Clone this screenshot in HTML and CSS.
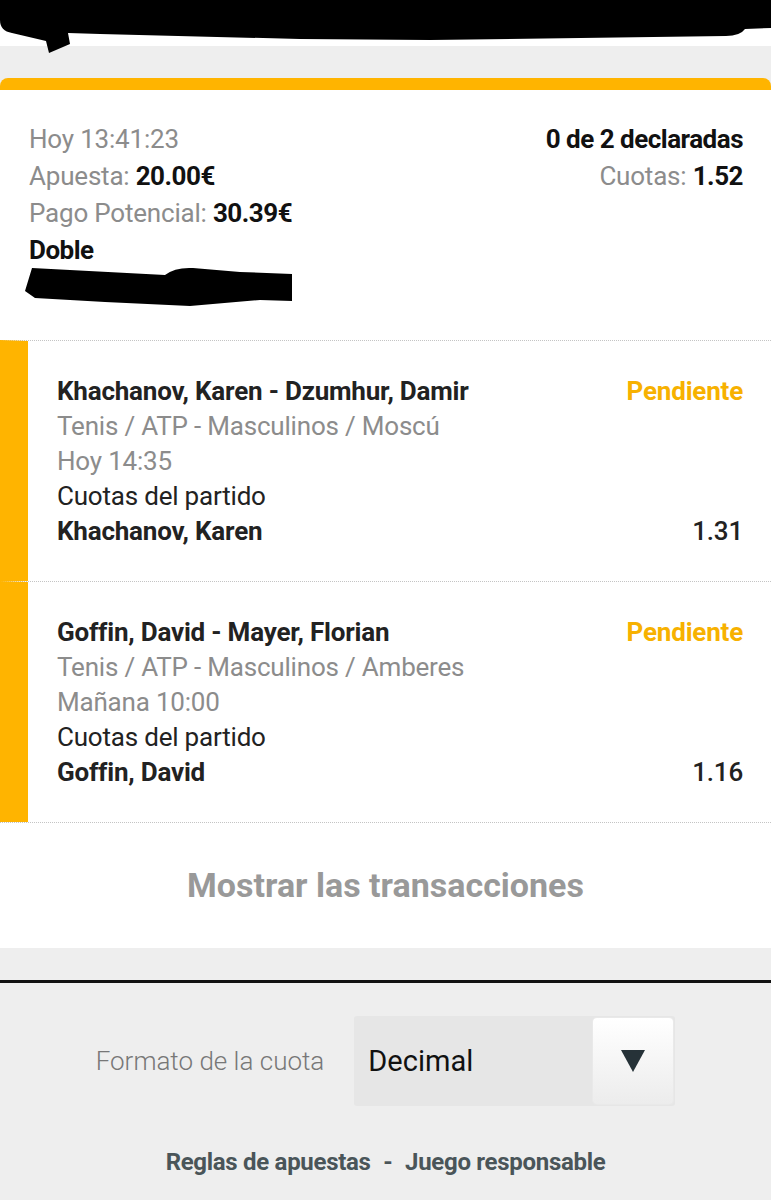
FILE: index.html
```html
<!DOCTYPE html>
<html lang="es">
<head>
    <meta charset="UTF-8">
    <meta name="viewport" content="width=device-width, initial-scale=1.0">
    <title>Apuesta Doble</title>
    <link rel="stylesheet" href="styles.css">
</head>
<body>
    <header class="topbar">
        <svg class="scribble" width="771" height="56" viewBox="0 0 771 56">
            <path d="M0 0 H771 V28 L745 29 Q740 36 726 36 L430 40 L300 39 L100 34 L68 33 L70 44 L49 53 L46 41 L12 33 Q0 31 0 20 Z" fill="#000"/>
        </svg>
    </header>

    <section class="card">
        <div class="summary">
            <div class="summary-left">
                <div class="muted">Hoy 13:41:23</div>
                <div><span class="muted">Apuesta:</span> <b>20.00€</b></div>
                <div><span class="muted">Pago Potencial:</span> <b>30.39€</b></div>
                <div><b>Doble</b></div>
                <svg class="scribble-small" width="270" height="40" viewBox="0 0 270 40">
                    <path d="M0 24 L7 1 L140 8 Q150 0 168 1 L215 5 L267 7 V34 L235 33 L165 39 L80 35 L10 31 Z" fill="#000"/>
                </svg>
            </div>
            <div class="summary-right">
                <div><b>0 de 2 declaradas</b></div>
                <div><span class="muted">Cuotas:</span> <b>1.52</b></div>
            </div>
        </div>

        <div class="selection">
            <div class="sel-row">
                <span class="sel-title">Khachanov, Karen - Dzumhur, Damir</span>
                <span class="sel-status">Pendiente</span>
            </div>
            <div class="muted">Tenis / ATP - Masculinos / Moscú</div>
            <div class="muted">Hoy 14:35</div>
            <div class="sel-market">Cuotas del partido</div>
            <div class="sel-row">
                <span class="sel-pick">Khachanov, Karen</span>
                <span class="sel-odds">1.31</span>
            </div>
        </div>

        <div class="selection">
            <div class="sel-row">
                <span class="sel-title">Goffin, David - Mayer, Florian</span>
                <span class="sel-status">Pendiente</span>
            </div>
            <div class="muted">Tenis / ATP - Masculinos / Amberes</div>
            <div class="muted">Mañana 10:00</div>
            <div class="sel-market">Cuotas del partido</div>
            <div class="sel-row">
                <span class="sel-pick">Goffin, David</span>
                <span class="sel-odds">1.16</span>
            </div>
        </div>

        <button class="show-tx">Mostrar las transacciones</button>
    </section>

    <footer class="footer">
        <div class="format-row">
            <label class="format-label">Formato de la cuota</label>
            <div class="select">
                <span class="select-value">Decimal</span>
                <span class="select-btn"><span class="arrow"></span></span>
            </div>
        </div>
        <div class="links">
            <a href="#">Reglas de apuestas</a>
            <span class="dash">-</span>
            <a href="#">Juego responsable</a>
        </div>
    </footer>
</body>
</html>
```

FILE: styles.css
```css
body {
    margin: 0;
    background: #eeeeee;
    font-family: Roboto, 'Noto Sans', sans-serif;
    font-size: 26px;
    color: #111;
}
b {
    font-weight: 700;
    letter-spacing: -0.5px;
}
.muted {
    color: #8c8c8c;
}
.topbar {
    height: 46px;
    background: #fff;
    overflow: visible;
}
.scribble {
    display: block;
}
.card {
    margin-top: 32px;
    background: #fff;
    border-top: 12px solid #ffb400;
    border-radius: 8px 8px 0 0;
}
.summary {
    display: flex;
    justify-content: space-between;
    padding: 31px 28px 34px 29px;
    line-height: 37px;
    letter-spacing: -0.2px;
}
.summary-right {
    text-align: right;
}
.scribble-small {
    display: block;
    margin: -2px 0 -1px -4px;
}
.selection {
    border-left: 28px solid #ffb400;
    border-top: 1px dotted #c4c4c4;
    padding: 33px 28px 32px 29px;
    line-height: 35px;
    letter-spacing: -0.2px;
}
.sel-row {
    display: flex;
    justify-content: space-between;
}
.sel-title,
.sel-pick,
.sel-status {
    font-weight: 700;
    color: #222;
}
.sel-status {
    color: #f7b100;
}
.sel-odds {
    font-weight: 500;
    color: #222;
}
.sel-market {
    color: #222;
}
.show-tx {
    display: block;
    width: 100%;
    border: none;
    border-top: 1px dotted #c4c4c4;
    background: #fff;
    padding: 42px 0 43px;
    font-family: Roboto, sans-serif;
    font-size: 34px;
    font-weight: 700;
    color: #999;
    cursor: pointer;
}
.footer {
    margin-top: 32px;
    border-top: 3px solid #111;
    padding: 33px 0 0;
}
.format-row {
    display: flex;
    align-items: center;
    justify-content: center;
    gap: 30px;
}
.format-label {
    color: #777;
    font-size: 26px;
    font-weight: 300;
}
.select {
    display: flex;
    align-items: center;
    width: 321px;
    height: 90px;
    background: #e6e6e6;
    border-radius: 3px;
    box-sizing: border-box;
    padding: 2px;
}
.select-value {
    flex: 1;
    padding-left: 12px;
    font-size: 29px;
    color: #111;
}
.select-btn {
    display: flex;
    align-items: center;
    justify-content: center;
    width: 80px;
    height: 86px;
    border-radius: 4px;
    background: linear-gradient(#ffffff, #ececec);
    box-shadow: 0 0 0 1px #e9e9e9;
}
.arrow {
    width: 0;
    height: 0;
    border-left: 12px solid transparent;
    border-right: 12px solid transparent;
    border-top: 22px solid #263238;
}
.links {
    text-align: center;
    margin-top: 42px;
    font-weight: 700;
    font-size: 24px;
    letter-spacing: -0.3px;
    color: #4a5559;
}
.links a {
    color: #4a5559;
    text-decoration: none;
}
.dash {
    margin: 0 7px;
}
```
